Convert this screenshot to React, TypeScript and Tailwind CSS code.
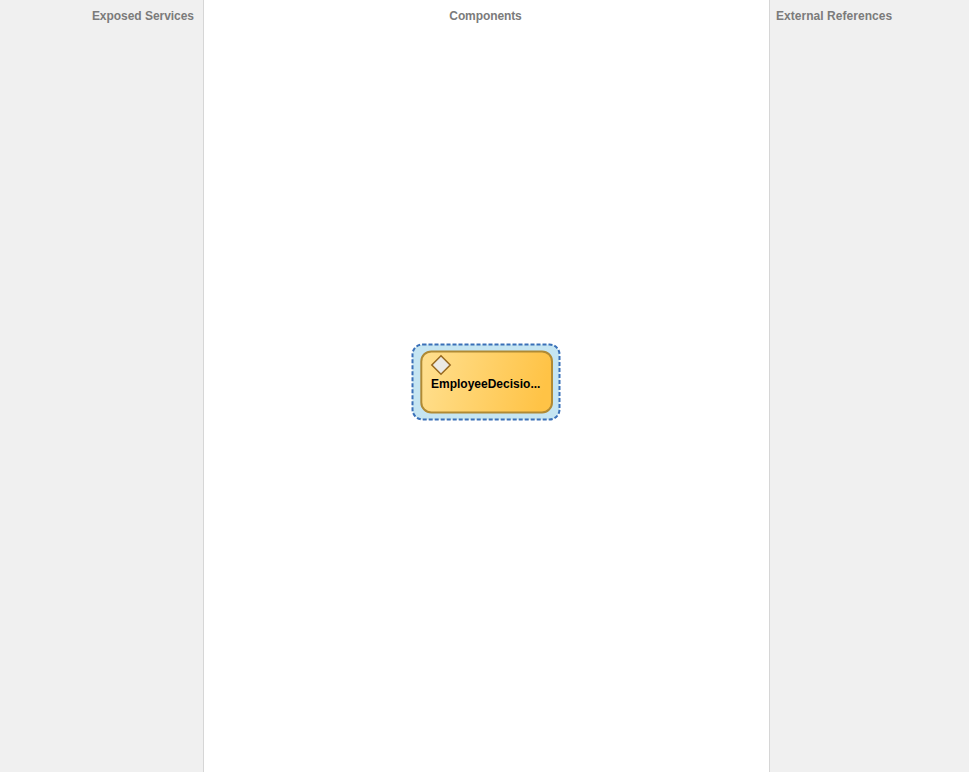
function DecisionComponent() {
  return (
    <div className="relative h-[78px] w-[150px]">
      <svg className="absolute inset-0" width="150" height="78" viewBox="0 0 150 78">
        <defs>
          <linearGradient id="amber" x1="0" y1="0" x2="1" y2="0.12">
            <stop offset="0" stopColor="#ffe090" />
            <stop offset="1" stopColor="#ffc346" />
          </linearGradient>
        </defs>
        <rect x="1.5" y="1.5" width="147" height="75" rx="10" fill="#c5e5f2" stroke="#3a70b8" strokeWidth="2" strokeDasharray="4 2" />
        <rect x="10.3" y="8.4" width="130.7" height="61" rx="10" fill="url(#amber)" stroke="#b08a34" strokeWidth="2" />
        <path d="M30 12.8 39.2 22 30 31.2 20.8 22Z" fill="#ebe9e4" stroke="#966820" strokeWidth="1.5" />
      </svg>
      <span className="absolute left-[20px] top-[33px] whitespace-nowrap text-[12px] leading-4 font-bold text-black">
        EmployeeDecisio...
      </span>
    </div>
  );
}

export default function App() {
  return (
    <main className="flex h-[772px] w-[969px] overflow-hidden bg-white font-['Liberation_Sans',Arial,sans-serif] text-[12px] leading-4 font-bold text-[#7b7b7b]">
      <section className="w-[204px] shrink-0 border-r border-[#d6d6d6] bg-[#f0f0f0] pt-2 pr-[9px] text-right">
        <h2 className="tracking-[-0.04px]">Exposed Services</h2>
      </section>
      <section className="flex w-[565px] shrink-0 flex-col items-center pt-2 pr-px">
        <h2 className="mr-[1px] tracking-[-0.1px]">Components</h2>
        <div className="mt-[319px]">
          <DecisionComponent />
        </div>
      </section>
      <section className="grow border-l border-[#d6d6d6] bg-[#f0f0f0] pt-2 pl-[6px]">
        <h2 className="tracking-[0.04px]">External References</h2>
      </section>
    </main>
  );
}
